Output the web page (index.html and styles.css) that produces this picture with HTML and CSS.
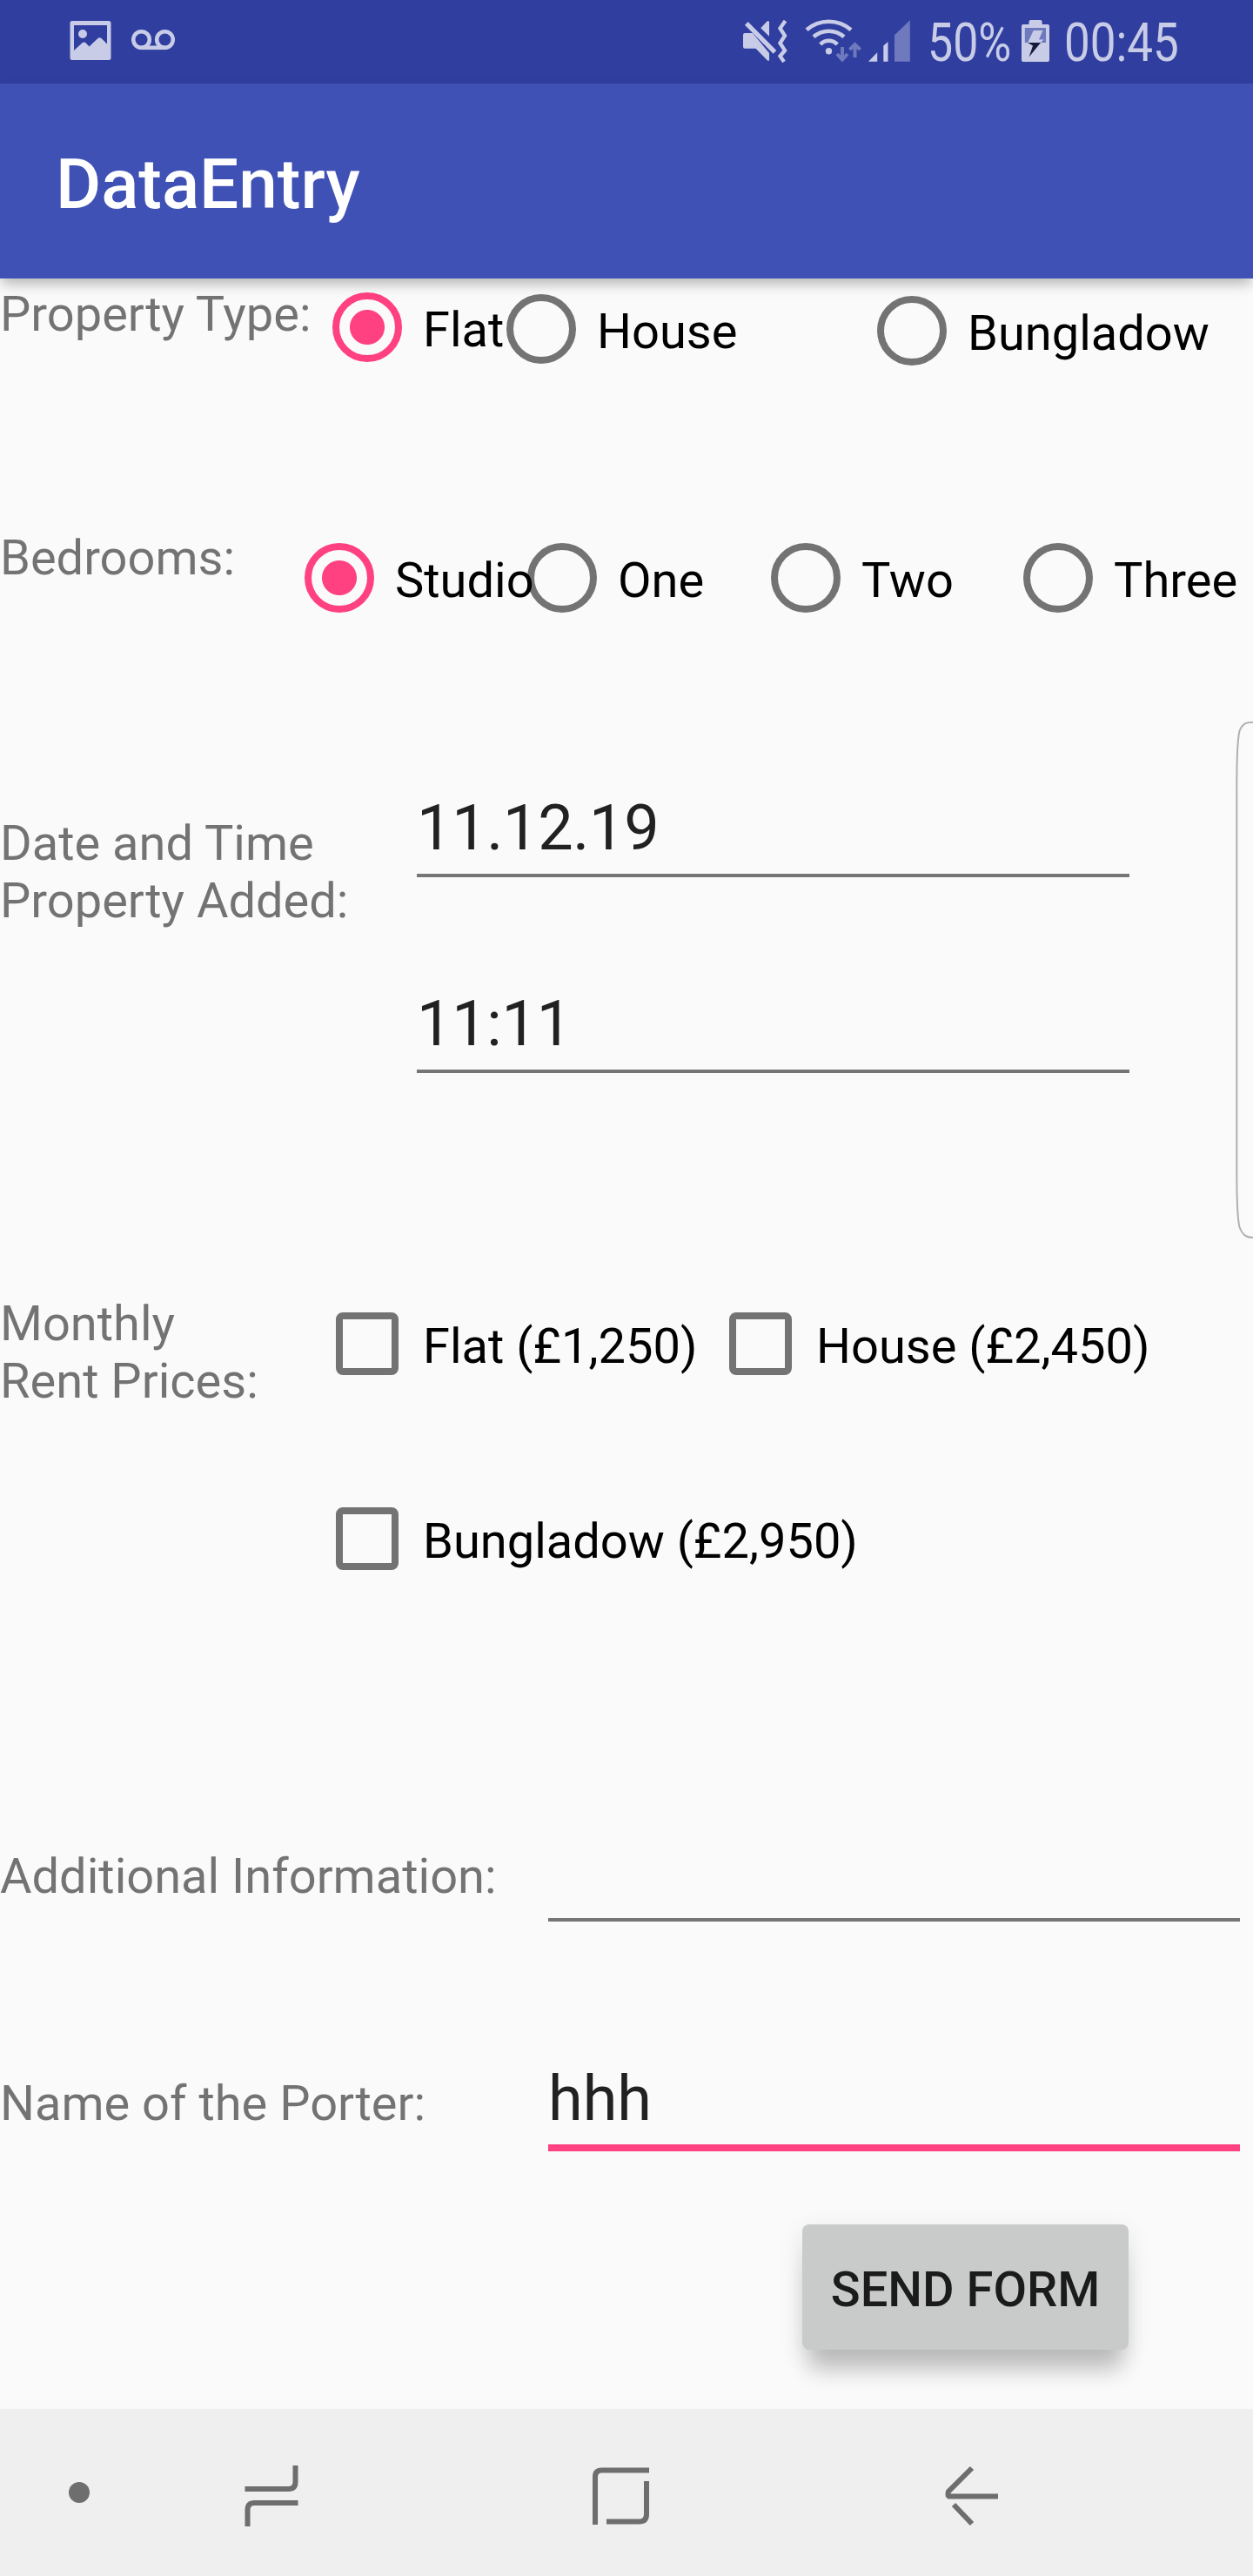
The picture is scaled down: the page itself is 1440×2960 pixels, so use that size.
FILE: index.html
```html
<!DOCTYPE html>
<html lang="en">
<head>
<meta charset="utf-8">
<title>DataEntry</title>
<link rel="stylesheet" href="styles.css">
</head>
<body>
<header class="status-bar">
  <svg class="icon-picture" width="48" height="96" viewBox="0 0 48 96">
    <path fill-rule="evenodd" d="M3 24H45Q47.500 24 47.500 26.500V66.500Q47.500 69 45 69H3Q.5 69 .5 66.500V26.500Q.5 24 3 24ZM5 29V58L14 49.700Q16.500 47.500 19 49.700L22.500 53.500L32.500 44Q34.500 42.500 36.500 44L43 50.500V29Z"/>
    <circle cx="15" cy="39" r="5"/>
  </svg>
  <svg class="icon-voicemail" width="50" height="96" viewBox="0 0 50 96">
    <g class="line"><circle cx="11.500" cy="45.500" r="9.300"/><circle cx="38.500" cy="45.500" r="9.300"/><path d="M11.500 54.800H38.500"/></g>
  </svg>
  <svg class="icon-mute" width="60" height="96" viewBox="0 0 60 96">
    <path d="M6 38H15L34 61V68Q34 71.500 31.500 69L18.600 55.700H6Q4 55.700 4 53.700V40Q4 38 6 38ZM24.200 32.300L31.500 24.500Q34 23 34 25.500V41.700Z"/>
    <path class="slash" d="M7.800 26.800L40.500 59.800"/>
    <path class="squiggle" d="M52.500 24L46.500 32.500L52 41L46.500 49.500L52 58L46.500 64.500L51 71"/>
  </svg>
  <svg class="icon-wifi" width="70" height="96" viewBox="0 0 70 96">
    <g class="line"><path d="M7 34.300A39 39 0 0 1 58 34.300"/><path d="M15 42.300A26.500 26.500 0 0 1 50 42.300"/><path d="M22.800 51A13.300 13.300 0 0 1 42.200 51"/></g>
    <circle cx="32.500" cy="58.700" r="3.700"/>
    <g class="faint-line"><path d="M48 54V68M42 62L48 68.500L54 62"/><path d="M62.500 66V51M56.500 57L62.500 51L68.500 57"/></g>
  </svg>
  <svg class="icon-signal" width="60" height="96" viewBox="0 0 60 96">
    <path d="M8 70.800L18.200 60.300V70.800ZM25.300 70.800V52.500L30.500 48V70.800Z"/>
    <path class="faint" d="M38 70.800V40.300L55.800 23.300V70.800Z"/>
  </svg>
  <span class="status-text battery-level">50%</span>
  <svg class="icon-battery" width="40" height="96" viewBox="0 0 40 96">
    <path d="M12.500 28V25Q12.500 23 14.500 23H25.600Q27.600 23 27.600 25V28H34Q36 28 36 30V69Q36 71 34 71H6Q4 71 4 69V30Q4 28 6 28Z"/>
    <path class="faint" d="M7.800 32H32V49H7.800Z"/>
    <path d="M17.700 35H28.400L24 45.500H29.600L25.600 49.300H11Z"/>
    <path class="bolt" d="M11 49H26L12.600 65.500L17 52.500Z"/>
  </svg>
  <span class="status-text clock">00:45</span>
</header>

<div class="app-bar"><h1 class="title">DataEntry</h1></div>

<main class="form">
  <section class="row property-type">
    <div class="label">Property Type:</div>
    <div class="option flat"><span class="radio checked"></span><span class="option-text">Flat</span></div>
    <div class="option house"><span class="radio"></span><span class="option-text">House</span></div>
    <div class="option bungladow"><span class="radio"></span><span class="option-text">Bungladow</span></div>
  </section>
  <section class="row bedrooms">
    <div class="label">Bedrooms:</div>
    <div class="option"><span class="radio checked"></span><span class="option-text">Studio</span></div>
    <div class="option"><span class="radio"></span><span class="option-text">One</span></div>
    <div class="option"><span class="radio"></span><span class="option-text">Two</span></div>
    <div class="option"><span class="radio"></span><span class="option-text">Three</span></div>
  </section>
  <section class="row added">
    <div class="label">Date and Time<br>Property Added:</div>
    <div class="fields">
      <div class="field">11.12.19</div>
      <div class="field">11:11</div>
    </div>
  </section>
  <section class="row prices">
    <div class="label">Monthly<br>Rent Prices:</div>
    <div class="checks">
      <div class="option"><span class="checkbox"></span><span class="option-text">Flat (£1,250)</span></div>
      <div class="option"><span class="checkbox"></span><span class="option-text">House (£2,450)</span></div>
      <div class="option"><span class="checkbox"></span><span class="option-text">Bungladow (£2,950)</span></div>
    </div>
  </section>
  <section class="row additional">
    <div class="label">Additional Information:</div>
    <div class="field"></div>
  </section>
  <section class="row porter">
    <div class="label">Name of the Porter:</div>
    <div class="field focused">hhh</div>
  </section>
  <button class="send">SEND FORM</button>
</main>

<svg class="edge-handle" width="20" height="600" viewBox="0 0 20 600">
  <path d="M20 5C12 5 8 6 4.500 15Q1.300 28 1.300 80V520Q1.300 572 4.500 585C8 594 12 597 20 597"/>
</svg>

<nav class="nav-bar">
  <span class="dot"></span>
  <svg class="nav-recents" width="62" height="72" viewBox="0 0 62 72">
    <path d="M58.500 1V20Q58.500 28 50.500 28H.5M3.500 71V52Q3.500 44 11.500 44H61.500"/>
  </svg>
  <svg class="nav-home" width="66" height="72" viewBox="0 0 66 72">
    <path d="M3 69V14Q3 6.500 10.500 6.500H65M62 19V57Q62 65.500 53.500 65.500H16"/>
  </svg>
  <svg class="nav-back" width="64" height="72" viewBox="0 0 64 72">
    <path d="M32 4L5 31Q3 36.500 7 36.500H62M11 46L32 68"/>
  </svg>
</nav>
</body>
</html>
```
FILE: styles.css
```css
* { box-sizing: border-box; }
body {
  margin: 0;
  width: 1440px;
  height: 2960px;
  display: flex;
  flex-direction: column;
  position: relative;
  overflow: hidden;
  background: #fafafa;
  font-family: Roboto, "Liberation Sans", sans-serif;
}
svg { display: block; flex: none; }

.status-bar {
  height: 96px;
  flex: none;
  display: flex;
  background: #303f9f;
  color: #c8cce7;
}
.status-bar svg { fill: #c8cce7; }
.status-bar .line, .status-bar .squiggle, .status-bar .slash { fill: none; stroke: #c8cce7; stroke-width: 4.600px; }
.status-bar .squiggle { stroke-width: 4.300px; }
.status-bar .slash { stroke-width: 5.200px; }
.status-bar .faint { fill: #6f79bd; }
.status-bar .faint-line { fill: none; stroke: #6f79bd; stroke-width: 4px; }
.status-bar .bolt { fill: #161b3c; }
.icon-picture { margin-left: 80px; }
.icon-voicemail { margin-left: 23px; }
.icon-mute { margin-left: 649px; }
.icon-wifi { margin-left: 10px; }
.status-text {
  flex: none;
  font-size: 61px;
  line-height: 70px;
  padding-top: 14px;
  transform-origin: 0 0;
  transform: scaleX(.85);
  white-space: nowrap;
}
.battery-level { width: 104px; margin-left: 16px; }
.clock { margin-left: 13px; transform: scaleX(.868); }

.app-bar {
  height: 224px;
  flex: none;
  padding: 69px 64px 0;
  background: #3f51b5;
  box-shadow: 0 8px 14px -2px rgba(0, 0, 0, .28);
  position: relative;
}
.title { margin: 0; font-size: 80px; line-height: 94px; font-weight: 500; color: #fff; }

.form { flex: none; height: 2448px; }
.row { display: grid; align-items: start; }
.label { font-size: 56px; line-height: 66px; color: rgba(0, 0, 0, .54); white-space: nowrap; }
.option { display: flex; height: 80px; align-items: center; }
.option-text { margin: 6px 0 0 24px; font-size: 56px; line-height: 66px; color: #000; white-space: nowrap; }
.radio {
  flex: none;
  width: 80px;
  height: 80px;
  border: 8px solid rgba(0, 0, 0, .54);
  border-radius: 50%;
}
.radio.checked {
  border-color: #ff4081;
  background: radial-gradient(circle, #ff4081 19.500px, transparent 20.500px);
}
.checkbox { flex: none; width: 72px; height: 72px; border: 8px solid #737373; border-radius: 8px; }
.checks .option-text { margin-left: 28px; }
.field {
  height: 99px;
  padding-top: 1px;
  border-bottom: 4px solid #757575;
  font-size: 72px;
  line-height: 84px;
  color: #212121;
}
.field.focused { height: 103px; border-bottom: 8px solid #ff4081; }

.property-type { height: 288px; padding-top: 8px; grid-template-columns: 382px 200px 426px 1fr; }
.flat { margin-top: 8px; }
.house { margin-top: 10px; }
.bungladow { margin-top: 12px; }
.bedrooms { height: 301px; grid-template-columns: 350px 256px 280px 290px 1fr; }
.bedrooms .option { margin-top: 16px; }
.added { height: 579px; grid-template-columns: 479px 819px; }
.added .label { margin-top: 27px; }
.fields { display: grid; gap: 126px; letter-spacing: -.3px; }
.prices { height: 621px; grid-template-columns: 386px 1fr; }
.checks { display: grid; grid-template-columns: 452px 1fr; row-gap: 144px; padding-top: 16px; }
.additional { height: 260px; grid-template-columns: 630px 795px; }
.additional .label { margin-top: 14px; }
.porter { height: 187px; grid-template-columns: 630px 795px; }
.porter .label { margin-top: 15px; }

.send {
  display: block;
  margin-left: 922px;
  width: 375px;
  height: 144px;
  padding: 6px 0 0;
  border: 0;
  border-radius: 8px;
  background: #c9cbca;
  color: #1b1b1b;
  font: 500 56px/66px Roboto, "Liberation Sans", sans-serif;
  white-space: nowrap;
  box-shadow: 0 32px 24px -8px rgba(0, 0, 0, .2), 0 8px 28px rgba(0, 0, 0, .1);
}

.edge-handle { position: absolute; left: 1420px; top: 825px; fill: none; stroke: #b0b0b0; stroke-width: 2px; }

.nav-bar { height: 192px; flex: none; display: flex; padding-top: 64px; background: #efefef; }
.nav-bar svg { fill: none; stroke: #6e6e6e; stroke-width: 6px; }
.dot { width: 24px; height: 24px; margin: 20px 0 0 79px; border-radius: 50%; background: #6e6e6e; }
.nav-recents { margin-left: 178px; }
.nav-home { margin-left: 338px; }
.nav-back { margin-left: 338px; }
```
